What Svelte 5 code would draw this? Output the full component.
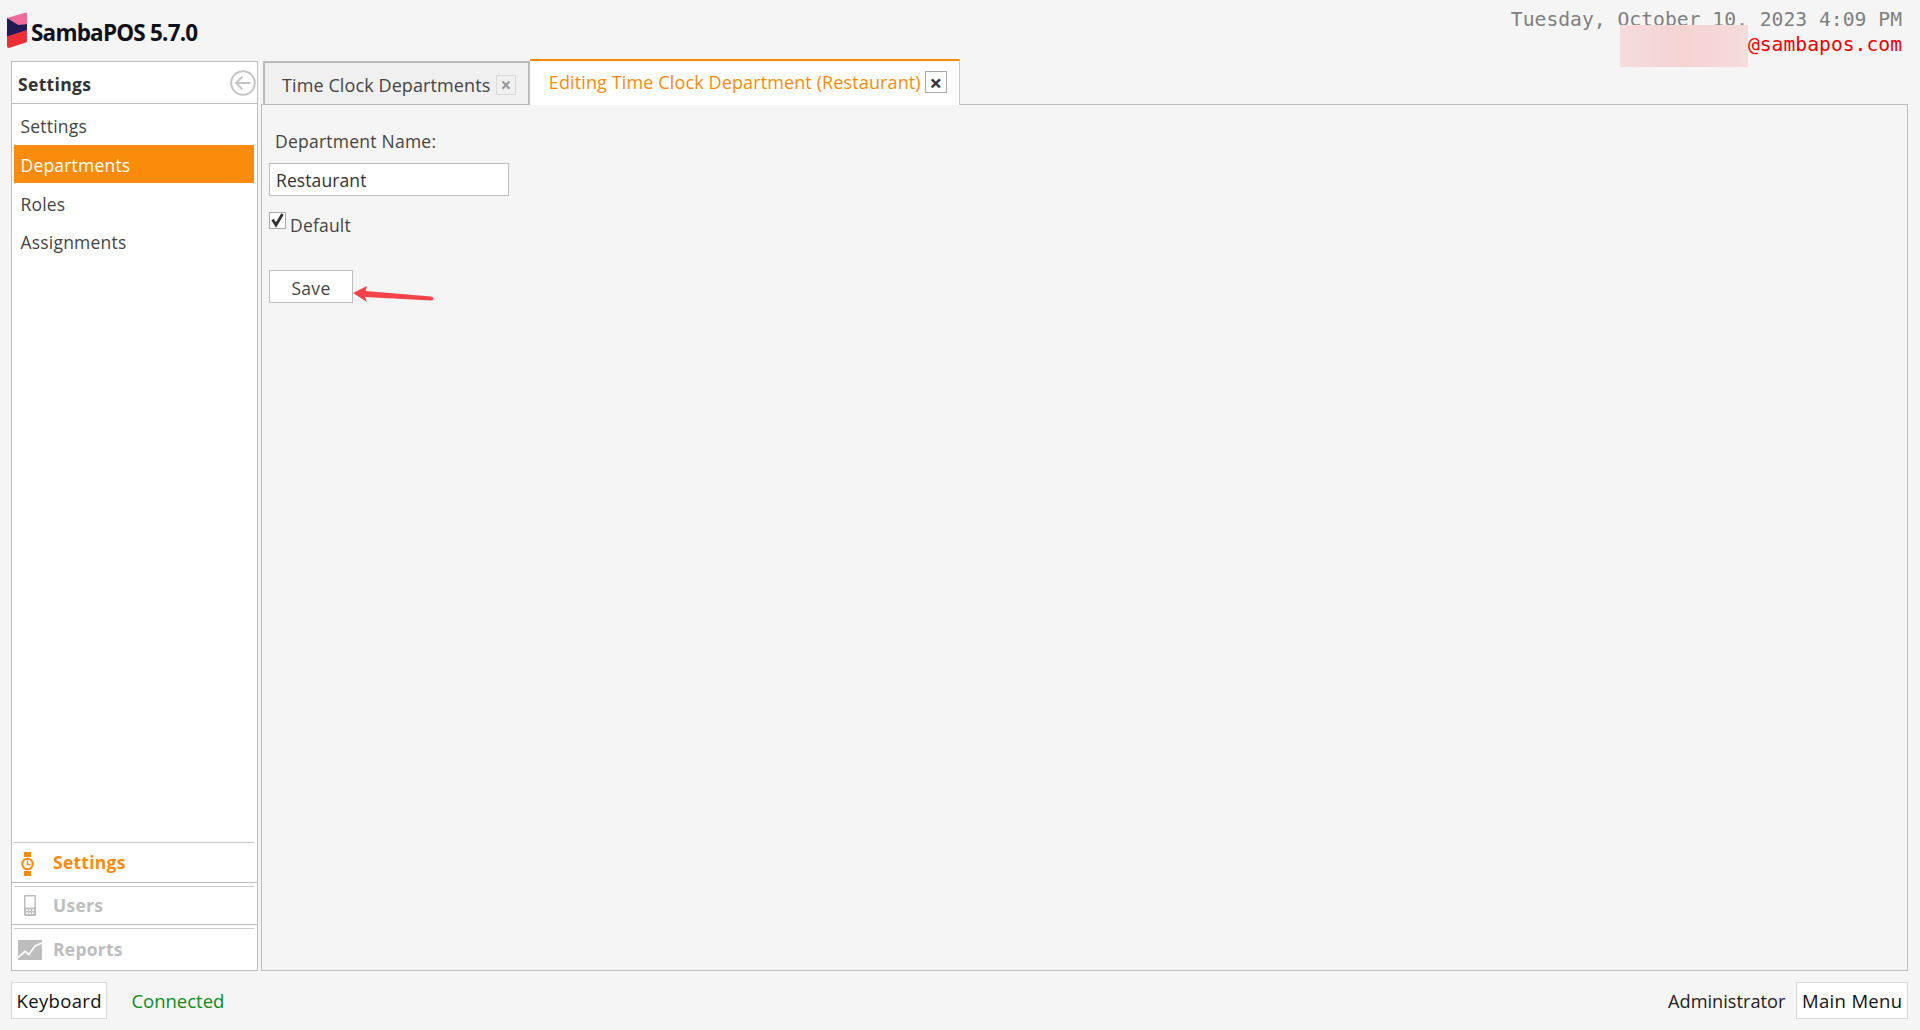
<script>
  const navItems = ['Settings', 'Departments', 'Roles', 'Assignments'];
  let selected = 'Departments';
  let isDefault = true;
  let departmentName = 'Restaurant';
</script>

<div class="page">
  <header class="topbar">
    <div class="brand">
      <svg class="logo" width="22" height="36" viewBox="0 0 22 36">
        <path d="M1 6 L20 0.500 Q21 0.500 21 2 V12 L13 13.500 Z" fill="#f06a9c" />
        <path d="M1 6 L12.500 13 L21 12 V18.500 L1 25 Z" fill="#231a55" />
        <path d="M1 24.500 L21 18 V29 Q21 30 20 30.500 L3 36 Q1 36 1 34 Z" fill="#ec2f36" />
      </svg>
      <span class="brand-name">SambaPOS 5.7.0</span>
    </div>
    <div class="status">
      <div class="date">Tuesday, October 10, 2023 4:09 PM</div>
      <div class="email">@sambapos.com</div>
      <div class="redacted"></div>
    </div>
  </header>

  <main class="main">
    <aside class="sidebar">
      <div class="side-head">
        <span>Settings</span>
        <svg width="26" height="26" viewBox="0 0 26 26" fill="none" stroke="#c4c4c4">
          <circle cx="13" cy="13" r="11.800" stroke-width="2" />
          <path d="M20.500 13 H6 M12.500 6.500 L6 13 L12.500 19.500" stroke-width="1.800" />
        </svg>
      </div>
      <nav class="nav">
        {#each navItems as item}
          <div class="nav-item" class:active={item === selected}>{item}</div>
        {/each}
      </nav>
      <div class="section current">
        <svg class="watch" width="24" height="24" viewBox="0 0 24 24" fill="none" stroke="#ff8a0c">
          <path d="M6 0 H13 V5 H6 Z M6 19 H13 V24 H6 Z" fill="#ff8a0c" stroke="none" />
          <circle cx="9.500" cy="12" r="5.300" stroke-width="2" fill="#fff" />
          <path d="M9.500 8.500 V12.500 H12.500" stroke-width="1.400" />
        </svg>
        <span>Settings</span>
      </div>
      <div class="section">
        <svg width="24" height="21" viewBox="0 0 24 21" fill="#bdbdbd">
          <path fill-rule="evenodd" d="M7 0 H17 Q18 0 18 1 V20 Q18 21 17 21 H7 Q6 21 6 20 V1 Q6 0 7 0 Z M7.500 1.500 V12.500 H16.500 V1.500 Z" />
          <path d="M8 14.500 H10 V16 H8 Z M11 14.500 H13 V16 H11 Z M14 14.500 H16 V16 H14 Z M8 17.500 H10 V19 H8 Z M11 17.500 H13 V19 H11 Z M14 17.500 H16 V19 H14 Z" fill="#fff" />
        </svg>
        <span>Users</span>
      </div>
      <div class="section last">
        <svg width="24" height="20" viewBox="0 0 24 20">
          <rect width="24" height="20" fill="#bdbdbd" />
          <path d="M0 17.500 L7 11.500 L11 14.500 L17 6 L24 3" fill="none" stroke="#fff" stroke-width="1.800" />
        </svg>
        <span>Reports</span>
      </div>
    </aside>

    <section class="workspace">
      <div class="tabs">
        <div class="tab">
          <span>Time Clock Departments</span>
          <span class="close">×</span>
        </div>
        <div class="tab active">
          <span>Editing Time Clock Department (Restaurant)</span>
          <span class="close">×</span>
        </div>
      </div>
      <div class="panel">
        <form class="form" on:submit|preventDefault>
          <label class="field-label" for="dept-name">Department Name:</label>
          <input id="dept-name" class="text-input" type="text" bind:value={departmentName} />
          <label class="check">
            <input type="checkbox" bind:checked={isDefault} />
            <span class="box">
              {#if isDefault}
                <svg width="15" height="15" viewBox="0 0 15 15" fill="none" stroke="#333" stroke-width="2.800">
                  <path d="M2.500 6.500 L6 12 L12.500 1" />
                </svg>
              {/if}
            </span>
            <span>Default</span>
          </label>
          <div class="actions">
            <button class="save" type="submit">Save</button>
            <svg class="pointer" width="81" height="18" viewBox="0 0 81 18">
              <path d="M0 8 L14 1 L12.500 6 L78 11.500 Q80.500 12 80.500 13.500 Q80.500 15.500 78 15.500 L12 12 L14 17 Z" fill="#f4434a" />
            </svg>
          </div>
        </form>
      </div>
    </section>
  </main>

  <footer class="footer">
    <div class="foot-group">
      <button class="foot-btn">Keyboard</button>
      <span class="connected">Connected</span>
    </div>
    <div class="foot-group right">
      <span class="user">Administrator</span>
      <button class="foot-btn">Main Menu</button>
    </div>
  </footer>
</div>

<style>
  :global(body) {
    margin: 0;
    background: #f5f5f5;
    font-family: 'Open Sans', 'Noto Sans', sans-serif;
  }

  .page {
    display: flex;
    flex-direction: column;
    height: 1030px;
    overflow: hidden;
    box-sizing: border-box;
    padding: 0 12px 0 11px;
    color: #444;
  }

  .topbar {
    height: 59px;
    flex: none;
    display: flex;
    justify-content: space-between;
    position: relative;
  }

  .brand {
    display: flex;
    align-items: flex-start;
    margin-left: -5px;
    padding-top: 12px;
    gap: 3px;
  }

  .brand-name {
    font-size: 22.500px;
    font-weight: 700;
    letter-spacing: -0.800px;
    color: #101018;
    line-height: 28px;
    margin-top: 7px;
  }

  .status {
    position: relative;
    text-align: right;
    font-family: 'DejaVu Sans Mono', 'Liberation Mono', monospace;
    font-size: 19.700px;
    padding: 7px 6px 0 0;
    line-height: 25px;
  }

  .date {
    color: #808080;
  }

  .email {
    color: #f00000;
  }

  .redacted {
    position: absolute;
    top: 25px;
    left: 109px;
    width: 128px;
    height: 42px;
    background: linear-gradient(90deg, #f5dcdc, #f5d3d3 50%, #f6dcdc);
  }

  .main {
    flex: none;
    height: 912px;
    display: flex;
    gap: 3px;
  }

  .sidebar {
    width: 247px;
    flex: none;
    margin-top: 2px;
    display: flex;
    flex-direction: column;
    box-sizing: border-box;
    background: #fff;
    border: 1px solid #bdbdbd;
    height: 910px;
  }

  .side-head {
    height: 42px;
    box-sizing: border-box;
    flex: none;
    display: flex;
    align-items: center;
    justify-content: space-between;
    padding: 1px 1px 0 6px;
    border-bottom: 1px solid #bdbdbd;
    font-size: 17.500px;
    font-weight: 700;
    letter-spacing: 0.350px;
    color: #333;
  }

  .side-head span {
    margin-top: 2px;
  }

  .nav {
    flex: 1;
    padding: 2px 3px 0 2px;
  }

  .nav-item {
    height: 39px;
    line-height: 41px;
    padding-left: 6.500px;
    font-size: 17.500px;
    letter-spacing: 0.200px;
    color: #444;
  }

  .nav-item:nth-child(3) {
    line-height: 42px;
  }

  .nav-item.active {
    background: #fb8b0a;
    color: #fff;
    height: 38px;
    line-height: 41px;
  }

  .section {
    height: 37px;
    flex: none;
    display: flex;
    align-items: center;
    position: relative;
    padding-left: 6px;
    font-size: 17.500px;
    font-weight: 700;
    letter-spacing: 0.250px;
    color: #bdbdbd;
    border-bottom: 1px solid #bdbdbd;
    margin-top: 4px;
  }

  .section::before {
    content: '';
    position: absolute;
    top: -1px;
    left: 2px;
    right: 3px;
    border-top: 1px solid #c8c8c8;
  }

  .section.current {
    height: 39px;
    color: #ff8a0c;
    margin-top: 0;
  }

  .section.last {
    border-bottom: none;
    height: 41px;
  }

  .section span {
    margin-bottom: 2px;
  }

  .section svg {
    flex: none;
    margin-right: 11px;
  }

  .section .watch {
    margin-top: 3px;
  }

  .workspace {
    flex: 1;
    min-width: 0;
    display: flex;
    flex-direction: column;
  }

  .tabs {
    height: 46px;
    flex: none;
    display: flex;
    align-items: flex-end;
    padding-left: 2px;
    position: relative;
    z-index: 1;
  }

  .tab {
    height: 44px;
    box-sizing: border-box;
    display: flex;
    align-items: center;
    gap: 5.500px;
    padding: 3px 12px 0 17px;
    border: 2px solid #bbb;
    border-bottom-width: 1px;
    background: #f0f0f0;
    font-size: 18px;
    letter-spacing: 0.100px;
    color: #444;
  }

  .tab.active {
    height: 46px;
    background: #fff;
    border: 1px solid #c8c8c8;
    border-left: none;
    border-top: 2px solid #fb8b0a;
    border-bottom: none;
    color: #fb8b0a;
    padding: 0 12px 3px 19px;
    gap: 4px;
    letter-spacing: 0.120px;
  }

  .close {
    width: 20px;
    height: 20px;
    box-sizing: border-box;
    display: flex;
    align-items: center;
    justify-content: center;
    border: 1px solid #d8d8d8;
    font-size: 19px;
    font-weight: 700;
    letter-spacing: 0;
    line-height: 1;
    color: #999;
  }

  .active .close {
    width: 22px;
    height: 22px;
    border-color: #aaa;
    background: #fff;
    font-size: 22px;
    color: #334;
  }

  .panel {
    flex: 1;
    box-sizing: border-box;
    border: 1px solid #bdbdbd;
    margin-top: -1px;
    padding: 23px 7px;
  }

  .form {
    display: flex;
    flex-direction: column;
    align-items: flex-start;
  }

  .field-label {
    font-size: 17.500px;
    letter-spacing: 0.240px;
    line-height: 24px;
    padding-top: 1px;
    margin-left: 6px;
    color: #444;
  }

  .text-input {
    width: 240px;
    height: 33px;
    box-sizing: border-box;
    margin-top: 10px;
    padding: 0 6px;
    border: 1px solid #bdbdbd;
    background: #fff;
    font: inherit;
    font-size: 17.500px;
    letter-spacing: 0.100px;
    color: #333;
    outline: none;
  }

  .check {
    display: flex;
    align-items: flex-start;
    margin-top: 16px;
    font-size: 17.500px;
    letter-spacing: 0.200px;
    line-height: 24px;
    color: #444;
  }

  .check input {
    display: none;
  }

  .box {
    width: 17px;
    height: 17px;
    box-sizing: border-box;
    display: flex;
    align-items: center;
    justify-content: center;
    border: 1px solid #aaa;
    background: #fff;
    margin-right: 4px;
  }

  .check > span:last-child {
    margin-top: 1px;
  }

  .actions {
    margin-top: 33px;
    position: relative;
  }

  .save {
    display: block;
    width: 84px;
    height: 33px;
    padding-top: 3px;
    border: 1px solid #bdbdbd;
    background: #fff;
    font: inherit;
    font-size: 17.500px;
    letter-spacing: 0.300px;
    color: #444;
  }

  .pointer {
    position: absolute;
    left: 84px;
    top: 15px;
  }

  .footer {
    flex: 1;
    display: flex;
    justify-content: space-between;
    align-items: flex-start;
    padding-top: 11px;
    font-size: 18.500px;
  }

  .foot-group {
    display: flex;
    align-items: center;
    gap: 24px;
  }

  .foot-group.right {
    gap: 11px;
  }

  .foot-btn {
    height: 37px;
    padding: 0 4.500px;
    border: 1px solid #d8d8d8;
    background: #fff;
    font: inherit;
    letter-spacing: 0.350px;
    color: #111;
  }

  .connected {
    color: #0c8a1e;
  }

  .user {
    font-size: 18.200px;
    color: #222;
  }
</style>
